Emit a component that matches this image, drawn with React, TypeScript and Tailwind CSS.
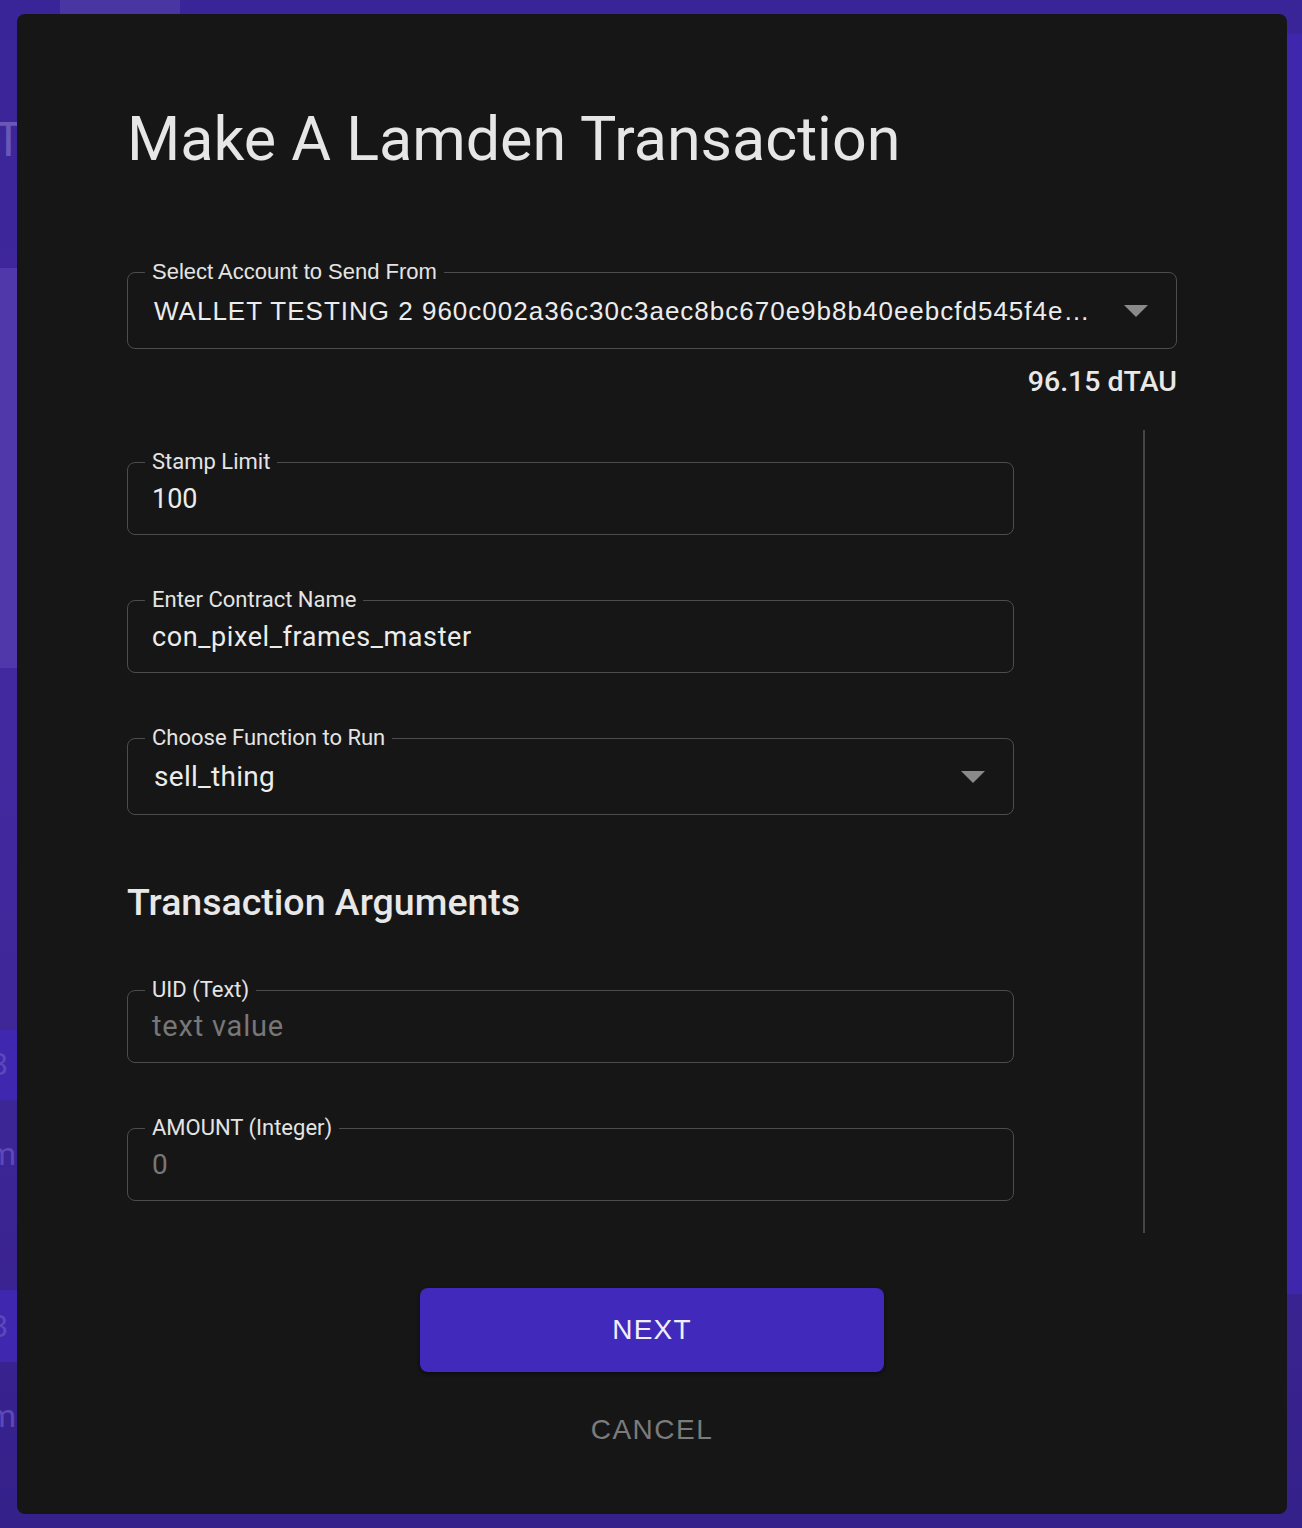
import React from "react";

const roboto = { fontFamily: "Roboto, 'Noto Sans', sans-serif" };
const arial = { fontFamily: "'Liberation Sans', Arial, sans-serif" };

// small dropdown caret like the MUI select
const Caret = () => (
  <svg width="24" height="12" viewBox="0 0 24 12" className="shrink-0">
    <path d="M0 0 L24 0 L12 12 Z" fill="#8a8a8a" />
  </svg>
);

type FieldProps = {
  label: string;
  children: React.ReactNode;
  select?: boolean;
  labelFont?: React.CSSProperties;
};

const Field = ({ label, children, select, labelFont = roboto }: FieldProps) => (
  <fieldset
    className={`min-w-0 border border-[#4c4c4c] rounded-lg pl-[17px] pr-[28px] ${
      select ? "pt-[11px] pb-[21px]" : "pt-[9px] pb-[19px]"
    }`}
  >
    <legend
      className="px-[7px] text-[22px] leading-[24px] text-[#e4e4e4]"
      style={labelFont}
    >
      {label}
    </legend>
    <div className="flex items-center gap-7 pl-[7px] h-[32px] min-w-0">{children}</div>
  </fieldset>
);

const App = () => {
  return (
    <div className="relative min-h-[1528px] w-full overflow-hidden bg-[#38238f]">
      {/* faint app behind the modal */}
      <div className="absolute inset-0 bg-gradient-to-b from-[#3a2598] via-[#43299f] to-[#35218a]" />
      <div className="absolute left-[60px] top-0 w-[120px] h-[14px] bg-[#4a36a3]" />
      <div className="absolute left-0 top-[1030px] w-[17px] h-[70px] bg-[#4027b0]" />
      <div className="absolute left-0 top-[1290px] w-[17px] h-[72px] bg-[#4027b0]" />
      <div className="absolute right-0 top-[34px] w-[15px] h-[1260px] bg-[#3f27ad]" />
      <div className="absolute left-0 top-[268px] w-[17px] h-[400px] bg-[#5038aa]" />
      <div className="absolute left-[-6px] top-[104px] text-[48px] text-[#6a58b8]" style={roboto}>T</div>
      <div className="absolute left-[-10px] top-[1040px] text-[32px] text-[#5c48b8]" style={roboto}>8</div>
      <div className="absolute left-[-12px] top-[1130px] text-[32px] text-[#5c48b8]" style={roboto}>m</div>
      <div className="absolute left-[-10px] top-[1302px] text-[32px] text-[#5c48b8]" style={roboto}>8</div>
      <div className="absolute left-[-12px] top-[1392px] text-[32px] text-[#5c48b8]" style={roboto}>m</div>

      {/* modal */}
      <div className="relative ml-[17px] mt-[14px] w-[1270px] h-[1500px] rounded-lg bg-[#161616] px-[110px] pt-[89px]">
        <h1
          className="text-[61px] leading-[72px] text-[#e6e6e6] font-normal"
          style={roboto}
        >
          Make A Lamden Transaction
        </h1>

        <div className="mt-[85px]">
          <Field label="Select Account to Send From" select labelFont={arial}>
            <span
              className="flex-1 min-w-0 truncate text-[26px] tracking-[1px] text-[#ececec] pl-[2px]"
              style={arial}
            >
              WALLET TESTING 2 960c002a36c30c3aec8bc670e9b8b40eebcfd545f4e1d7b2c9a0
            </span>
            <Caret />
          </Field>
        </div>

        <div
          className="mt-[17px] text-right text-[28.5px] leading-[32px] font-medium text-[#e8e8e8]"
          style={roboto}
        >
          96.15 dTAU
        </div>

        <div className="mt-[32px] flex">
          <div className="w-[887px] pt-[20px] pb-[32px] flex flex-col">
            <Field label="Stamp Limit">
              <span className="text-[27px] text-[#ececec]" style={roboto}>
                100
              </span>
            </Field>

            <div className="mt-[53px]">
              <Field label="Enter Contract Name">
                <span className="text-[27px] text-[#ececec] tracking-[0.6px]" style={roboto}>
                  con_pixel_frames_master
                </span>
              </Field>
            </div>

            <div className="mt-[53px]">
              <Field label="Choose Function to Run" select>
                <span className="flex-1 pl-[2px] text-[28px] text-[#ececec] tracking-[0.3px]" style={roboto}>
                  sell_thing
                </span>
                <Caret />
              </Field>
            </div>

            <h2
              className="mt-[65px] text-[37.5px] leading-[44px] font-medium text-[#e8e8e8]"
              style={roboto}
            >
              Transaction Arguments
            </h2>

            <div className="mt-[54px]">
              <Field label="UID (Text)">
                <span className="text-[29px] text-[#777777] tracking-[0.8px]" style={roboto}>
                  text value
                </span>
              </Field>
            </div>

            <div className="mt-[53px]">
              <Field label="AMOUNT (Integer)">
                <span className="text-[28px] text-[#777777]" style={roboto}>
                  0
                </span>
              </Field>
            </div>
          </div>
          <div className="ml-auto mr-[32px] w-[2px] bg-[#444444]" />
        </div>

        <div className="mt-[55px] flex flex-col items-center">
          <button
            className="w-[464px] h-[84px] rounded-lg bg-[#412abb] text-[28px] tracking-[1.2px] text-[#f1eefc] shadow-[0_2px_4px_rgba(0,0,0,0.5)]"
            style={arial}
          >
            NEXT
          </button>
          <button
            className="mt-[42px] leading-[32px] text-[28px] tracking-[1.5px] text-[#7b7b7b]"
            style={arial}
          >
            CANCEL
          </button>
        </div>
      </div>
    </div>
  );
};

export default App;
